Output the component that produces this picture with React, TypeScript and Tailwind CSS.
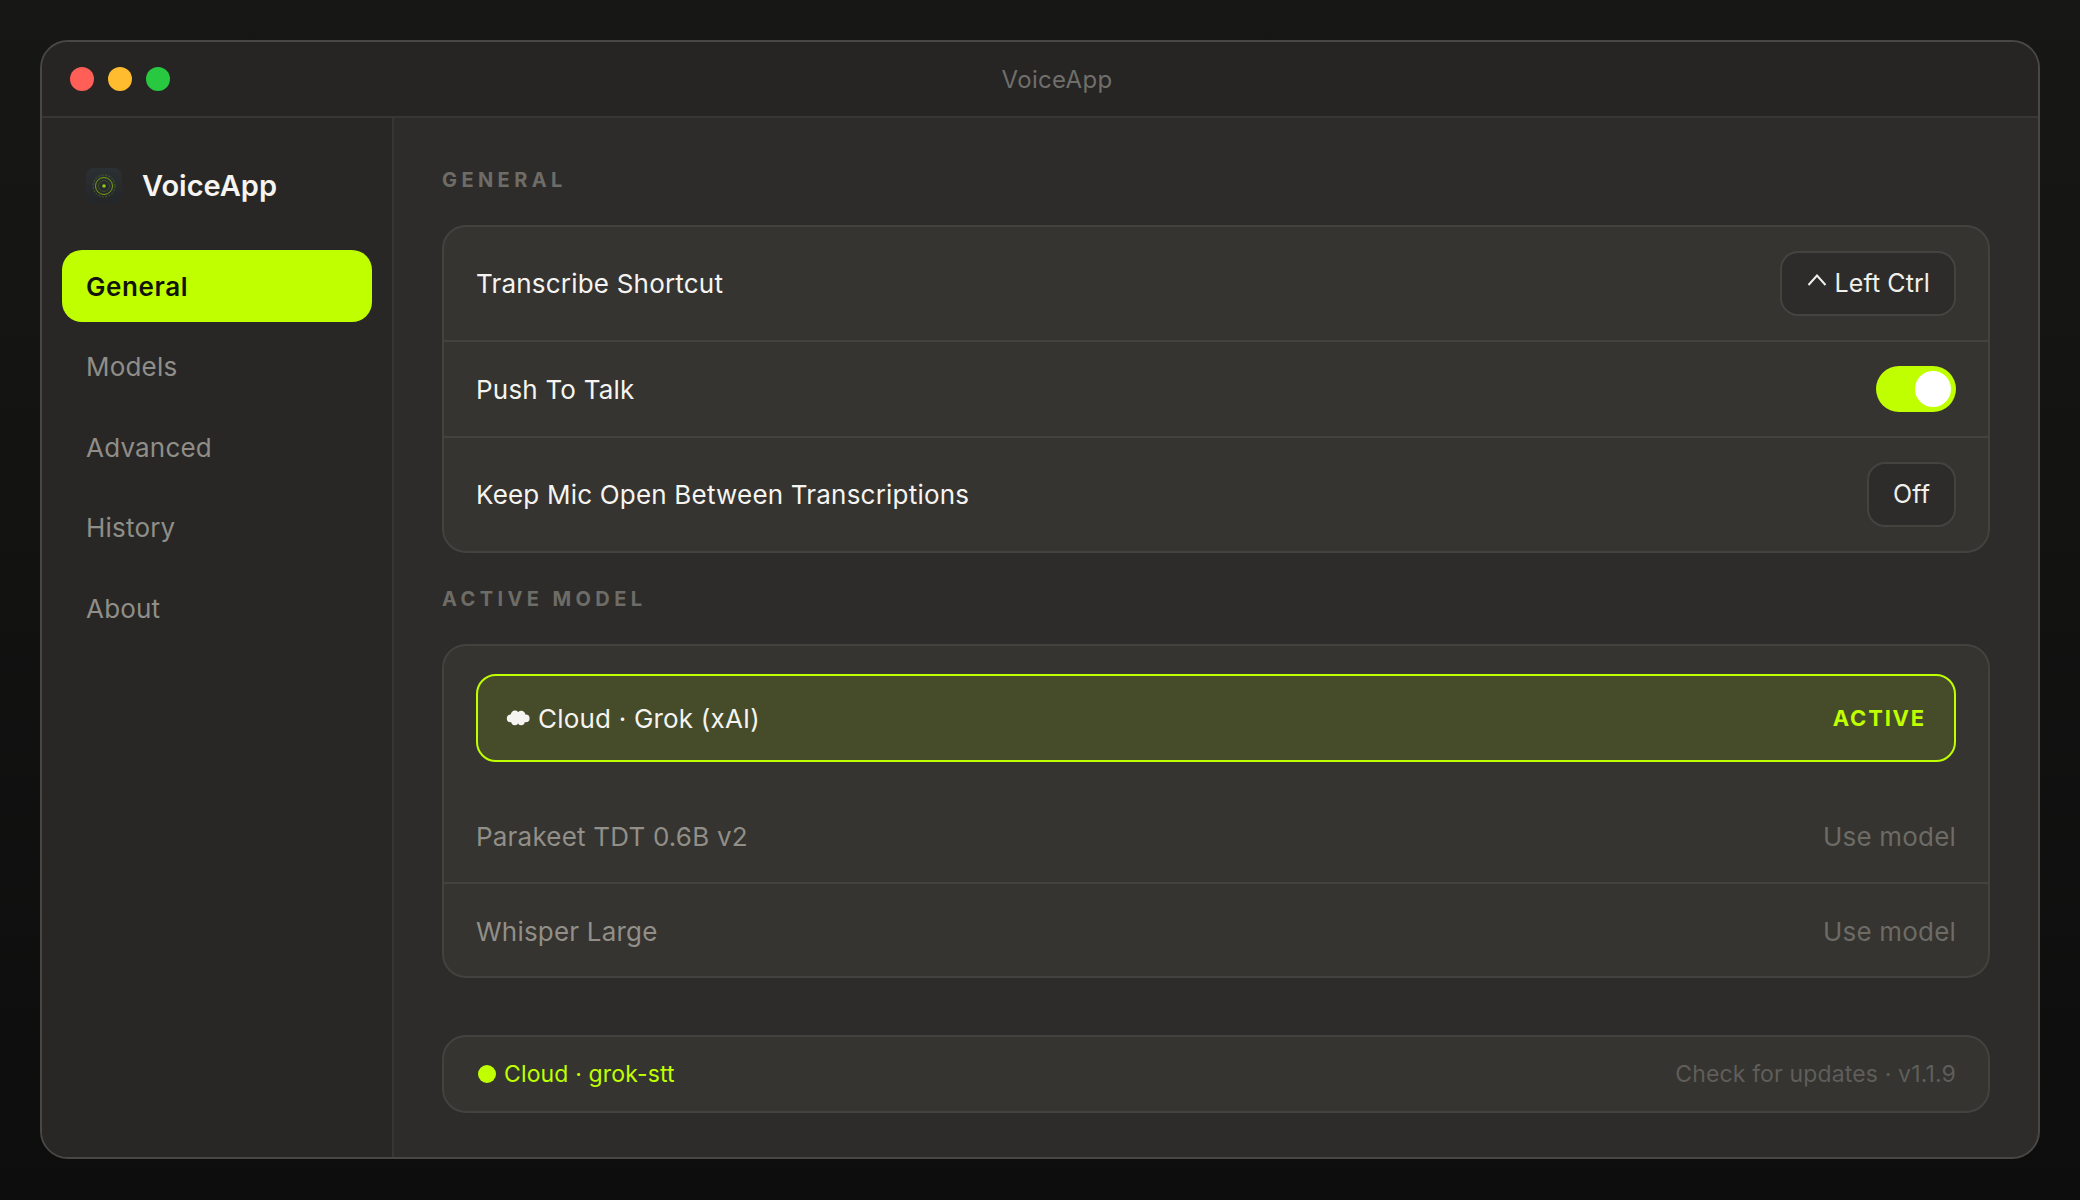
const navItems = ["General", "Models", "Advanced", "History", "About"];

function Logo() {
  return (
    <div className="flex h-[36px] w-[36px] items-center justify-center rounded-[8px] bg-gradient-to-b from-[#2b3034] to-[#242628]">
      <svg width="26" height="26" viewBox="0 0 26 26" fill="none">
        <circle cx="13" cy="13" r="11" stroke="#6f9a1a" strokeWidth="0.8" strokeDasharray="2 1.5" opacity="0.6" />
        <circle cx="13" cy="13" r="8.5" stroke="#7fae12" strokeWidth="0.9" />
        <circle cx="13" cy="13" r="5.5" stroke="#4d6420" strokeWidth="0.6" />
        <circle cx="13" cy="13" r="1.8" fill="#8fc916" />
      </svg>
    </div>
  );
}

function Sidebar() {
  return (
    <aside className="flex w-[352px] shrink-0 flex-col border-r-2 border-[#373634] bg-[#282726] px-[20px]">
      <div className="flex h-[132px] items-center gap-[20px] pl-[24px] pt-[4px]">
        <Logo />
        <span className="text-[29px] font-semibold text-[#f5f4f0]">VoiceApp</span>
      </div>
      <nav className="flex flex-col gap-[8.6px]">
        {navItems.map((item) =>
          item === "General" ? (
            <div key={item} className="flex h-[72px] items-center rounded-[20px] bg-[#bfff00] pl-[24px] text-[26px] font-semibold tracking-[0.6px] text-[#12140a]">
              {item}
            </div>
          ) : (
            <div key={item} className="flex h-[72px] items-center pl-[24px] text-[26px] tracking-[0.2px] text-[#8f8e88]">
              {item}
            </div>
          ),
        )}
      </nav>
    </aside>
  );
}

function SectionLabel({ children }: { children: string }) {
  return <div className="mb-[33px] h-[24px] text-[20px] leading-[24px] font-bold tracking-[4.4px] text-[#6d6c67]">{children}</div>;
}

function KeyButton({ children }: { children: React.ReactNode }) {
  return (
    <div className="flex h-[65px] items-center rounded-[18px] border-2 border-[#44433f] bg-[#2d2c2a] px-[24px] pt-[1px] text-[25px] tracking-[0.1px] text-[#f0efeb]">
      {children}
    </div>
  );
}

function CloudIcon() {
  return (
    <svg width="24" height="18" viewBox="0 0 24 18" fill="#f5f4f0">
      <circle cx="4.6" cy="9.4" r="3.8" />
      <circle cx="9" cy="6" r="4.4" />
      <circle cx="15.2" cy="6" r="4.2" />
      <circle cx="19.8" cy="9.4" r="3.8" />
      <circle cx="8.8" cy="12.6" r="3.6" />
      <circle cx="15.2" cy="12.6" r="3.6" />
      <ellipse cx="12" cy="9.4" rx="8" ry="4" />
    </svg>
  );
}

function GeneralCard() {
  return (
    <div className="rounded-[24px] border-2 border-[#43423e] bg-[#353430] text-[26px] tracking-[0.2px] text-[#f5f4f0]">
      <div className="flex items-center justify-between border-b-2 border-[#43423e] px-[32px] py-[24px]">
        <span>Transcribe Shortcut</span>
        <KeyButton>
          <svg width="22" height="14" viewBox="0 0 22 14" fill="none" stroke="#f0efeb" strokeWidth="2" className="mb-[8px] mr-[6px]">
            <polyline points="2.5,12 11,2.5 19.5,12" />
          </svg>
          Left Ctrl
        </KeyButton>
      </div>
      <div className="flex items-center justify-between border-b-2 border-[#43423e] px-[32px] py-[24px]">
        <span>Push To Talk</span>
        <div className="flex h-[46px] w-[80px] items-center justify-end rounded-full bg-[#bfff00] pr-[5px]">
          <div className="h-[36px] w-[36px] rounded-full bg-white" />
        </div>
      </div>
      <div className="flex items-center justify-between px-[32px] py-[24px]">
        <span>Keep Mic Open Between Transcriptions</span>
        <KeyButton>Off</KeyButton>
      </div>
    </div>
  );
}

function ModelCard() {
  return (
    <div className="rounded-[24px] border-2 border-[#43423e] bg-[#353430] pt-[28px] text-[26px] tracking-[0.2px]">
      <div className="mx-[32px] mb-[30px] flex h-[88px] items-center justify-between rounded-[20px] border-2 border-[#bfff00] bg-[#464b2a] px-[28px]">
        <span className="flex items-center gap-[8px] text-[#f5f4f0]">
          <CloudIcon />
          Cloud · Grok (xAI)
        </span>
        <span className="text-[22px] font-bold tracking-[1.8px] text-[#bfff00]">ACTIVE</span>
      </div>
      <div className="flex h-[92px] items-center justify-between border-b-2 border-[#43423e] px-[32px] pb-[1px]">
        <span className="text-[#918f88]">Parakeet TDT 0.6B v2</span>
        <span className="text-[#6c6b66]">Use model</span>
      </div>
      <div className="flex h-[92px] items-center justify-between px-[32px] pt-[2px]">
        <span className="text-[#918f88]">Whisper Large</span>
        <span className="text-[#6c6b66]">Use model</span>
      </div>
    </div>
  );
}

export default function App() {
  return (
    <div className="h-[1200px] bg-gradient-to-b from-[#171716] to-[#0d0d0d] p-[40px] font-['Inter',sans-serif]">
      <div className="flex h-[1119px] flex-col overflow-hidden rounded-[28px] border-2 border-[#484745] bg-[#2d2c2a]">
        <header className="flex h-[76px] shrink-0 items-center gap-[14px] border-b-2 border-[#373634] bg-[#262524] pl-[28px]">
          <div className="h-[24px] w-[24px] rounded-full bg-[#ff5f57]" />
          <div className="h-[24px] w-[24px] rounded-full bg-[#febc2e]" />
          <div className="h-[24px] w-[24px] rounded-full bg-[#28c840]" />
          <span className="flex-1 pr-[108px] pt-[1px] text-center text-[24px] tracking-[0.3px] text-[#6f6e6a]">VoiceApp</span>
        </header>
        <div className="flex min-h-0 flex-1">
          <Sidebar />
          <main className="flex flex-1 flex-col px-[48px] pt-[50px]">
            <SectionLabel>GENERAL</SectionLabel>
            <GeneralCard />
            <div className="h-[34px]" />
            <SectionLabel>ACTIVE MODEL</SectionLabel>
            <ModelCard />
            <div className="mt-[57px] flex h-[78px] items-center justify-between rounded-[24px] border-2 border-[#43423e] bg-[#353430] px-[32px] text-[23px] tracking-[0.15px]">
              <span className="flex items-center gap-[8px] text-[#bfff00]">
                <span className="ml-[2px] h-[18px] w-[18px] rounded-full bg-[#bfff00]" />
                Cloud · grok-stt
              </span>
              <span className="text-[#5f5e5a]">Check for updates · v1.1.9</span>
            </div>
          </main>
        </div>
      </div>
    </div>
  );
}
